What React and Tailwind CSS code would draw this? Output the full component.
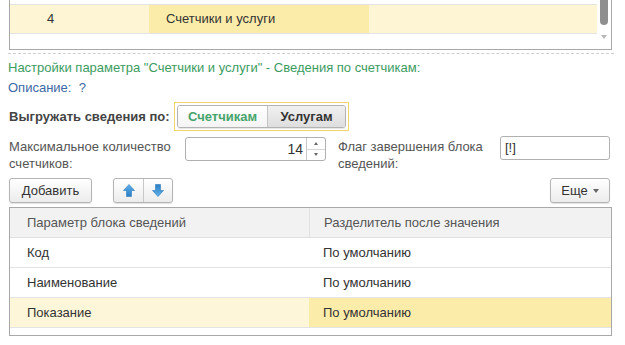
import React from 'react';

const font = { fontFamily: '"Liberation Sans", Arial, sans-serif' };

function ArrowIcon({ down }) {
  return (
    <svg width="12" height="13" viewBox="0 0 12 13" className={down ? 'rotate-180' : ''}>
      <defs>
        <linearGradient id={down ? 'gd' : 'gu'} x1="0" y1="0" x2="0" y2="1">
          <stop offset="0" stopColor="#5fb0ec" />
          <stop offset="1" stopColor="#2a7fc4" />
        </linearGradient>
      </defs>
      <path d="M6 0.5 L11.5 6.5 L8.5 6.5 L8.5 12.5 L3.5 12.5 L3.5 6.5 L0.5 6.5 Z" fill={`url(#${down ? 'gd' : 'gu'})`} stroke="#2c79b8" strokeWidth="0.6" />
    </svg>
  );
}

function Btn({ children, className = '' }) {
  return (
    <div className={`h-[25px] flex items-center border border-[#b4b4b4] rounded-[3px] bg-gradient-to-b from-white to-[#ececec] shadow-[0_1px_1px_rgba(0,0,0,0.12)] text-[13px] text-[#333] ${className}`}>
      {children}
    </div>
  );
}

export default function App() {
  const rows = [
    ['Код', 'По умолчанию'],
    ['Наименование', 'По умолчанию'],
    ['Показание', 'По умолчанию'],
  ];

  return (
    <div className="w-[625px] h-[345px] bg-white overflow-hidden text-[13px] text-[#4a4a4a]" style={font}>
      {/* top list */}
      <div className="relative ml-[9px] w-[603px] h-[50px] border border-t-0 border-[#a8a8a8]">
        <div className="h-[4px]" />
        <div className="h-[30px] mr-[14px] border-y border-[#e3e3e3] bg-[#fdf5d3] flex items-center text-[#333]">
          <div className="w-[139px] pl-[37px]">4</div>
          <div className="w-[220px] h-full bg-[#fcecaa] flex items-center pl-[17px]">Счетчики и услуги</div>
        </div>
        <div className="absolute right-[3px] top-0 w-[8px] h-[25px] rounded-b-[4px] bg-[#8f8f8f]" />
        <svg className="absolute right-[4px] top-[35px]" width="6" height="4" viewBox="0 0 6 4">
          <path d="M0 0 L6 0 L3 4 Z" fill="#b8b8b8" />
        </svg>
      </div>

      <div className="mt-[3px] ml-[8px] w-[606px] border-t border-dashed border-[#cfcfcf]" />

      <div className="mt-[6px] ml-[8px] h-[16px] leading-[16px] text-[#3c9c62]">
        Настройки параметра "Счетчики и услуги" - Сведения по счетчикам:
      </div>
      <div className="mt-[4px] ml-[8px] h-[16px] leading-[16px] text-[#3d68a6]">
        Описание:&nbsp; ?
      </div>

      {/* toggle */}
      <div className="mt-[6px] ml-[9px] flex items-center">
        <div className="w-[165px] font-bold text-[#444]">Выгружать сведения по:</div>
        <div className="border border-[#efd56c] p-[2px]">
          <div className="flex h-[23px] border border-[#b3b3b3] rounded-[3px] overflow-hidden font-bold shadow-[0_1px_1px_rgba(0,0,0,0.1)]">
            <div className="w-[90px] flex items-center justify-center bg-gradient-to-b from-white to-[#f4f4f4] text-[#46a46c] border-r border-[#c4c4c4]">
              Счетчикам
            </div>
            <div className="w-[77px] flex items-center justify-center bg-gradient-to-b from-[#f0f0f0] to-[#dedede] text-[#333]">
              Услугам
            </div>
          </div>
        </div>
      </div>

      {/* fields */}
      <div className="mt-[7px] ml-[9px] flex items-start">
        <div className="w-[176px] leading-[17px] text-[#555]">
          Максимальное количество<br />счетчиков:
        </div>
        <div className="mt-[-1px] w-[141px] h-[24px] flex border border-[#b0b0b0] rounded-[3px] bg-white">
          <div className="flex-1 flex items-center justify-end pr-[3px] text-[#333] text-[14px]">14</div>
          <div className="w-[19px] border-l border-[#c8c8c8] flex flex-col">
            <div className="flex-1 flex items-center justify-center border-b border-[#d5d5d5]">
              <svg width="4" height="3" viewBox="0 0 4 3"><path d="M0 3 L4 3 L2 0 Z" fill="#666" /></svg>
            </div>
            <div className="flex-1 flex items-center justify-center">
              <svg width="4" height="3" viewBox="0 0 4 3"><path d="M0 0 L4 0 L2 3 Z" fill="#666" /></svg>
            </div>
          </div>
        </div>
        <div className="ml-[12px] w-[162px] leading-[17px] text-[#555]">
          Флаг завершения блока<br />сведений:
        </div>
        <div className="mt-[-2px] w-[110px] h-[24px] flex items-center pl-[4px] border border-[#b0b0b0] rounded-[3px] bg-white text-[#333]">
          [!]
        </div>
      </div>

      {/* command bar */}
      <div className="mt-[6px] ml-[9px] w-[601px] flex items-center">
        <Btn className="w-[83px] justify-center">Добавить</Btn>
        <Btn className="ml-[21px] w-[60px]">
          <div className="w-[30px] h-full flex items-center justify-center border-r border-[#c8c8c8]">
            <ArrowIcon />
          </div>
          <div className="flex-1 h-full flex items-center justify-center">
            <ArrowIcon down />
          </div>
        </Btn>
        <Btn className="ml-auto w-[60px] justify-center gap-[5px]">
          Еще
          <svg width="6" height="4" viewBox="0 0 6 4"><path d="M0 0 L6 0 L3 4 Z" fill="#666" /></svg>
        </Btn>
      </div>

      {/* bottom table */}
      <div className="mt-[4px] ml-[9px] w-[603px] h-[129px] border border-[#a8a8a8]">
        <div className="h-[30px] flex items-center bg-[#f2f2f2] border-b border-[#e0e0e0] text-[#555]">
          <div className="w-[299px] pl-[17px]">Параметр блока сведений</div>
          <div className="flex-1 h-full flex items-center pl-[14px] border-l border-[#e0e0e0]">Разделитель после значения</div>
        </div>
        {rows.map(([a, b], i) => {
          const sel = i === rows.length - 1;
          return (
            <div key={a} className={`h-[30px] flex items-center border-b border-[#e3e3e3] text-[#333] ${sel ? 'bg-[#fdf6d8]' : ''}`}>
              <div className="w-[299px] pl-[17px]">{a}</div>
              <div className={`flex-1 h-full flex items-center pl-[14px] ${sel ? 'bg-[#fcecaa]' : ''}`}>{b}</div>
            </div>
          );
        })}
      </div>
    </div>
  );
}
